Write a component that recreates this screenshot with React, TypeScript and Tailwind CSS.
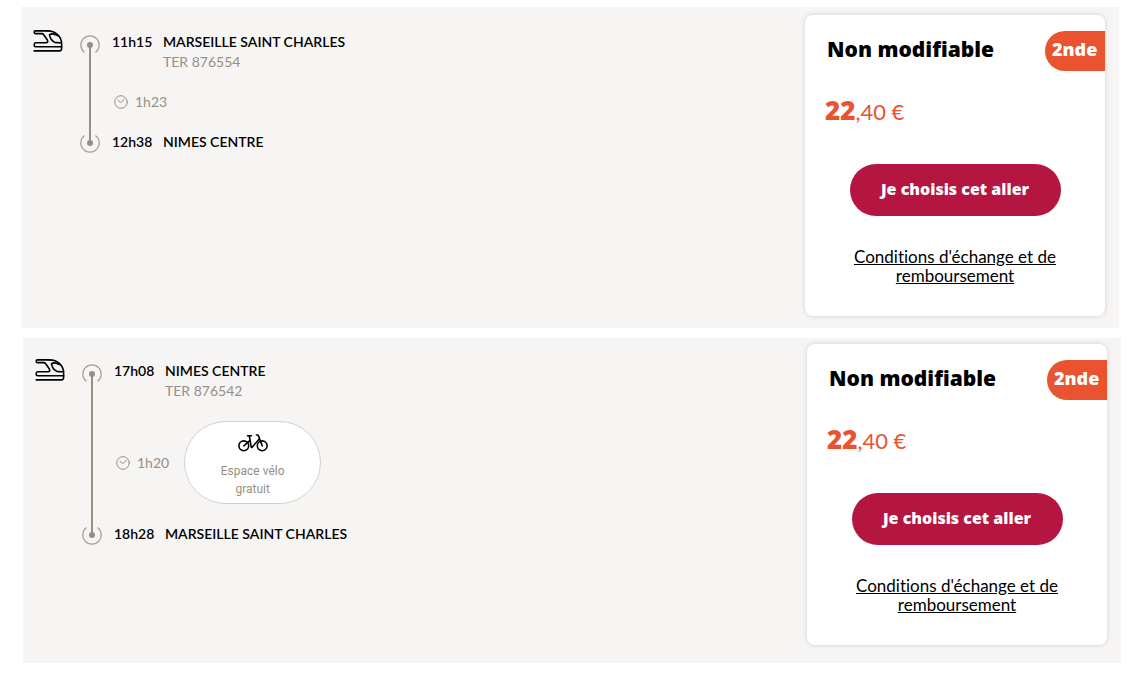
interface Trip {
  departure: string;
  from: string;
  train: string;
  duration: string;
  arrival: string;
  to: string;
  bike: boolean;
}

const outbound: Trip = {
  departure: '11h15',
  from: 'MARSEILLE SAINT CHARLES',
  train: 'TER 876554',
  duration: '1h23',
  arrival: '12h38',
  to: 'NIMES CENTRE',
  bike: false,
};

const inbound: Trip = {
  departure: '17h08',
  from: 'NIMES CENTRE',
  train: 'TER 876542',
  duration: '1h20',
  arrival: '18h28',
  to: 'MARSEILLE SAINT CHARLES',
  bike: true,
};

function TrainIcon() {
  return (
    <svg width="30" height="22" viewBox="0 0 30 22" fill="none" stroke="#000" strokeWidth="1.6" strokeLinecap="round" strokeLinejoin="round" className="shrink-0" aria-hidden="true">
      <path d="M14.5 .9H2.4Q1.2 .9 1.2 2.2T2.4 3.6H8.6Q9.9 3.6 10.7 4.7L14.4 10Q15.6 12.7 12.8 12.7H2.7Q1.2 12.7 1.2 14.4V15.2Q1.2 16.7 2.7 16.7H28.6" />
      <path d="M14.5 .9C22.5 .9 28.6 6.5 28.6 13.6V18.6Q28.6 20.9 26.5 20.9H1.2" />
      <path d="M24.6 5.6C21.8 4 18.3 3.6 16.5 4.6C16.9 7.5 19.1 11 21.6 12.2Q23 12.8 28.4 12.7" />
    </svg>
  );
}

function BikeIcon() {
  return (
    <svg width="30" height="18" viewBox="0 0 30 18" fill="none" stroke="#000" strokeWidth="1.6" strokeLinecap="round" strokeLinejoin="round" aria-hidden="true">
      <circle cx="5.8" cy="11.8" r="4.9" />
      <circle cx="24.2" cy="11.8" r="4.9" />
      <path d="M5.8 11.8L12 6.4M9.5 1.8H13.5M11.3 1.8L13.2 12.8Q13.5 14.2 14.4 13L21.2 5" />
      <path d="M18.4 1H19.6Q20.2 1 20.4 1.6L24.2 11.8" />
    </svg>
  );
}

function ClockIcon() {
  return (
    <svg width="14" height="14" viewBox="0 0 14 14" fill="none" stroke="#988f83" strokeLinecap="round" aria-hidden="true">
      <circle cx="7" cy="7" r="6.3" />
      <path d="M4 5.2L6.6 7.6L10.4 4.4" />
    </svg>
  );
}

function Timeline() {
  return (
    <div className="flex w-5 flex-col items-center" aria-hidden="true">
      <svg width="20" height="24" viewBox="0 0 20 24" fill="none" className="overflow-visible">
        <path d="M4.5 20.4A9.2 9.2 0 1 1 15.5 20.4" stroke="#a79f95" strokeWidth="1.2" />
        <circle cx="10" cy="13" r="3" fill="#988f83" />
        <path d="M10 13V24" stroke="#988f83" strokeWidth="2" />
      </svg>
      <div className="w-0.5 grow bg-[#988f83]" />
      <svg width="20" height="24" viewBox="0 0 20 24" fill="none" className="overflow-visible">
        <path d="M4.5 7.6A9.2 9.2 0 1 0 15.5 7.6" stroke="#a79f95" strokeWidth="1.2" />
        <circle cx="10" cy="15" r="3" fill="#988f83" />
        <path d="M10 0V15" stroke="#988f83" strokeWidth="2" />
      </svg>
    </div>
  );
}

function Journey({ trip }: { trip: Trip }) {
  return (
    <div className="flex items-start pt-[15px] text-sm leading-5">
      <TrainIcon />
      <div className="ml-[17px] flex gap-3 pt-0.5">
        <Timeline />
        <div className="flex flex-col gap-5">
          <div className="grid grid-cols-[51px_auto]">
            <span className="font-semibold">{trip.departure}</span>
            <span className="font-semibold">{trip.from}</span>
            <span className="col-start-2 text-[#988f83]">{trip.train}</span>
          </div>
          <div className="flex items-center gap-[15px] pl-0.5 text-[#988f83]">
            <span className="flex items-center gap-[7px]">
              <ClockIcon />
              {trip.duration}
            </span>
            {trip.bike && (
              <div className="flex h-[83px] w-[137px] flex-col items-center gap-2.5 rounded-full border border-[#d5d1ca] bg-white px-8 pt-3 text-center font-[Roboto,sans-serif] text-xs leading-[18px]">
                <BikeIcon />
                <span>Espace vélo gratuit</span>
              </div>
            )}
          </div>
          <div className="grid grid-cols-[51px_auto] font-semibold">
            <span>{trip.arrival}</span>
            <span>{trip.to}</span>
          </div>
        </div>
      </div>
    </div>
  );
}

function Offer() {
  return (
    <div className="flex w-[300px] shrink-0 flex-col rounded-lg bg-white pt-4 pb-[31px] shadow-[0_0_5px_rgba(0,0,0,0.15)]">
      <div className="flex items-center justify-between pl-[22px] font-['Open_Sans',sans-serif] font-extrabold">
        <h2 className="pb-1 text-[21px] leading-8">Non modifiable</h2>
        <span className="flex h-10 w-[60px] items-center rounded-l-full bg-[#e9532f] pb-1 pl-[7px] text-lg text-white">2nde</span>
      </div>
      <p className="mt-[23px] flex h-8 items-baseline pl-5 text-[22px] leading-8 text-[#e9532f]">
        <span className="font-['Open_Sans',sans-serif] text-[26px] leading-8 font-extrabold">22</span>,40 €
      </p>
      <button type="button" className="mt-[38px] h-[52px] w-[211px] cursor-pointer self-center rounded-full bg-[#b51641] pb-0.5 font-['Open_Sans',sans-serif] text-base font-extrabold text-white">
        Je choisis cet aller
      </button>
      <a href="#conditions" className="mx-10 mt-[31px] text-center text-[17px] leading-[19px] underline [font-variant-ligatures:none]">
        Conditions d'échange et de remboursement
      </a>
    </div>
  );
}

export default function App() {
  return (
    <main className="flex flex-col gap-2.5 bg-white pt-[7px] font-[Lato,sans-serif] text-black">
      <section className="mr-2.5 ml-[21px] flex items-start justify-between bg-[#f6f5f4] pt-2 pr-[14px] pb-3 pl-3">
        <Journey trip={outbound} />
        <Offer />
      </section>
      <section className="mr-2 ml-[23px] flex items-start justify-between bg-[#f6f5f4] pt-1.5 pr-[14px] pb-[18px] pl-3">
        <Journey trip={inbound} />
        <Offer />
      </section>
    </main>
  );
}
